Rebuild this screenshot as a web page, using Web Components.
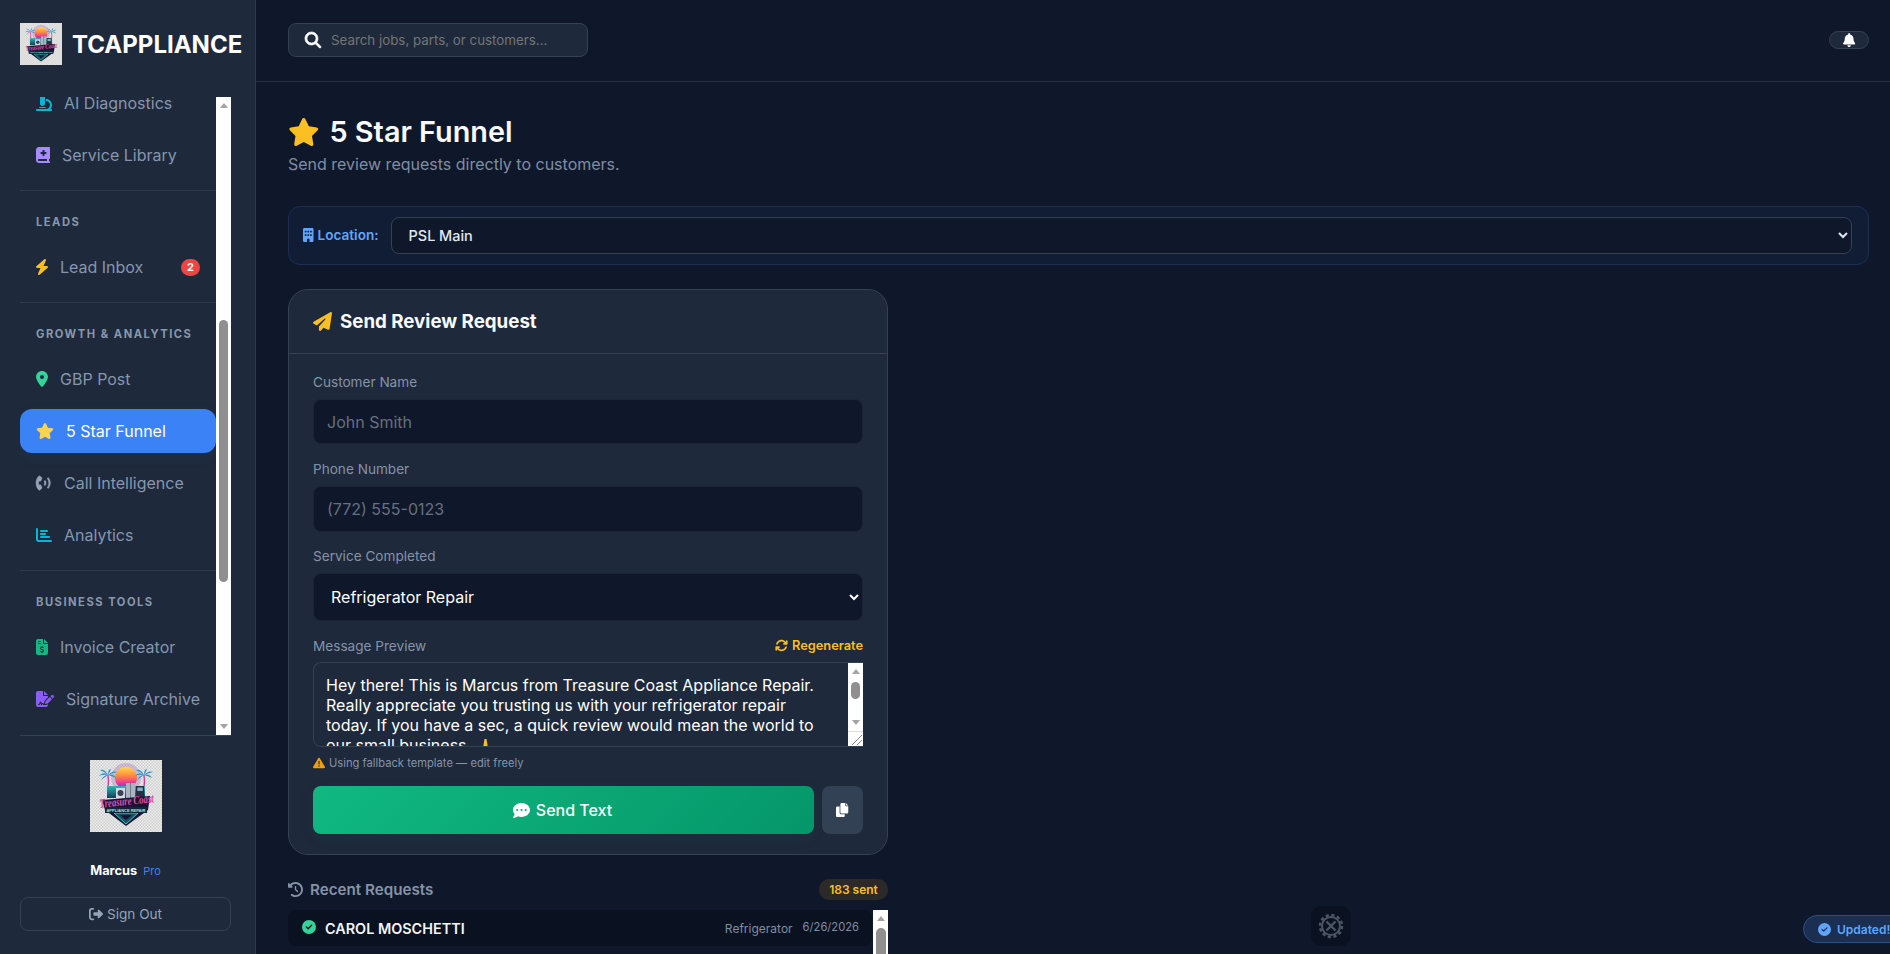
<![CDATA[<!DOCTYPE html>
<html lang="en"><head><meta charset="utf-8"><title>5 Star Funnel</title>
<style>
html,body{margin:0;height:100%;overflow:hidden;background:#0f172a}
body{font-family:Inter,"Liberation Sans",sans-serif;color:#f8fafc}
</style></head>
<body>
<tc-app>
  <tc-sidebar slot="sidebar">
    <tc-nav-section flush>
      <tc-nav-item><tc-icon slot="icon" name="microscope" color="#06b6d4"></tc-icon>AI Diagnostics</tc-nav-item>
      <tc-nav-item><tc-icon slot="icon" name="book" color="#a78bfa"></tc-icon>Service Library</tc-nav-item>
    </tc-nav-section>
    <tc-nav-section label="Leads">
      <tc-nav-item><tc-icon slot="icon" name="bolt" color="#fbbf24"></tc-icon>Lead Inbox<tc-badge slot="badge">2</tc-badge></tc-nav-item>
    </tc-nav-section>
    <tc-nav-section label="Growth &amp; Analytics">
      <tc-nav-item><tc-icon slot="icon" name="pin" color="#34d399"></tc-icon>GBP Post</tc-nav-item>
      <tc-nav-item active><tc-icon slot="icon" name="star" color="#fcd34d"></tc-icon>5 Star Funnel</tc-nav-item>
      <tc-nav-item><tc-icon slot="icon" name="call" color="#94a3b8" bold="14"></tc-icon>Call Intelligence</tc-nav-item>
      <tc-nav-item><tc-icon slot="icon" name="chart" color="#06b6d4"></tc-icon>Analytics</tc-nav-item>
    </tc-nav-section>
    <tc-nav-section label="Business Tools" last>
      <tc-nav-item><tc-icon slot="icon" name="invoice" color="#10b981"></tc-icon>Invoice Creator</tc-nav-item>
      <tc-nav-item><tc-icon slot="icon" name="signature" color="#8b5cf6"></tc-icon>Signature Archive</tc-nav-item>
    </tc-nav-section>
  </tc-sidebar>
  <tc-topbar slot="top"></tc-topbar>
  <tc-page-head></tc-page-head>
  <tc-location-bar></tc-location-bar>
  <tc-review-card></tc-review-card>
  <tc-recent>
    <tc-request name="Carol Moschetti" service="Refrigerator" date="6/26/2026"></tc-request>
  </tc-recent>
  <tc-gear slot="float"></tc-gear>
  <tc-toast slot="float">Updated!</tc-toast>
</tc-app>
<script>
const P={
search:[512,"M416 208c0 45.9-14.9 88.3-40 122.7L502.6 457.4c12.5 12.5 12.5 32.8 0 45.3s-32.8 12.5-45.3 0L330.7 376c-34.4 25.2-76.8 40-122.7 40C93.1 416 0 322.9 0 208S93.1 0 208 0S416 93.1 416 208zM208 352a144 144 0 1 0 0-288 144 144 0 1 0 0 288z"],
star:[576,"M316.9 18C311.6 7 300.4 0 288.1 0s-23.4 7-28.8 18L195 150.3 51.4 171.5c-12 1.8-22 10.2-25.7 21.7s-.7 24.2 7.9 32.7L137.8 329 113.2 474.7c-2 12 3 24.2 12.9 31.3s23 8 33.8 2.3l128.3-68.5 128.3 68.5c10.8 5.7 23.9 4.9 33.8-2.3s14.9-19.3 12.9-31.3L438.5 329 542.7 225.9c8.6-8.5 11.7-21.2 7.9-32.7s-13.7-19.9-25.7-21.7L381.2 150.3 316.9 18z"],
plane:[512,"M498.1 5.6c10.1 7 15.4 19.1 13.5 31.2l-64 416c-1.5 9.7-7.4 18.2-16 23s-18.9 5.4-28 1.6L284 427.7l-68.5 74.1c-8.9 9.7-22.9 12.9-35.2 8.1S160 493.2 160 480V396.4c0-4 1.5-7.8 4.2-10.7L331.8 202.8c5.8-6.3 5.6-16-.4-22s-15.7-6.4-22-.7L106 360.8 17.7 316.6C7.1 311.3 .3 300.7 0 288.9s5.9-22.8 16.1-28.7l448-256c10.7-6.1 23.9-5.5 34 1.4z"],
bell:[448,"M224 0c-17.7 0-32 14.3-32 32V51.2C119 66 64 130.6 64 208v18.8c0 47-17.3 92.4-48.5 127.6l-7.4 8.3c-8.4 9.4-10.4 22.9-5.3 34.4S19.4 416 32 416H416c12.6 0 24-7.4 29.2-18.9s3.1-25-5.3-34.4l-7.4-8.3C401.3 319.2 384 273.9 384 226.8V208c0-77.4-55-142-128-156.8V32c0-17.7-14.3-32-32-32zm45.3 493.3c12-12 18.7-28.3 18.7-45.3H224 160c0 17 6.7 33.3 18.7 45.3s28.3 18.7 45.3 18.7s33.3-6.7 45.3-18.7z"],
bolt:[384,"M349.4 44.6c5.9-13.7 1.5-29.7-10.6-38.5s-28.6-8-39.9 1.8l-256 224c-10 8.8-13.6 22.9-8.9 35.3S50.7 288 64 288H175.5L98.6 467.4c-5.9 13.7-1.5 29.7 10.6 38.5s28.6 8 39.9-1.8l256-224c10-8.8 13.6-22.9 8.9-35.3s-16.6-20.7-30-20.7H272.5L349.4 44.6z",32],
pin:[384,"M215.7 499.2C267 435 384 279.4 384 192C384 86 298 0 192 0S0 86 0 192c0 87.4 117 243 168.3 307.2c12.3 15.3 35.1 15.3 47.4 0zM192 128a64 64 0 1 1 0 128 64 64 0 1 1 0-128z"],
microscope:[512,"M160 32c0-17.7 14.3-32 32-32h32c17.7 0 32 14.3 32 32c17.7 0 32 14.3 32 32V288c0 17.7-14.3 32-32 32c0 17.7-14.3 32-32 32H192c-17.7 0-32-14.3-32-32c-17.7 0-32-14.3-32-32V64c0-17.7 14.3-32 32-32zM32 448H320c70.7 0 128-57.3 128-128s-57.3-128-128-128V128c106 0 192 86 192 192c0 49.2-18.5 94-48.9 128H480c17.7 0 32 14.3 32 32s-14.3 32-32 32H320 32c-17.7 0-32-14.3-32-32s14.3-32 32-32zm80-64H304c8.8 0 16 7.2 16 16s-7.2 16-16 16H112c-8.8 0-16-7.2-16-16s7.2-16 16-16z"],
book:[448,"M0 96C0 43 43 0 96 0H384h32c17.7 0 32 14.3 32 32V352c0 17.7-14.3 32-32 32v64c17.7 0 32 14.3 32 32s-14.3 32-32 32H384 96c-53 0-96-43-96-96V96zM64 416c0 17.7 14.3 32 32 32H352V384H96c-17.7 0-32 14.3-32 32zM208 112v48H160c-8.8 0-16 7.2-16 16v32c0 8.8 7.2 16 16 16h48v48c0 8.8 7.2 16 16 16h32c8.8 0 16-7.2 16-16V224h48c8.8 0 16-7.2 16-16V176c0-8.8-7.2-16-16-16H272V112c0-8.8-7.2-16-16-16H224c-8.8 0-16 7.2-16 16z"],
call:[512,"M110 20C40 60 0 150 0 256s40 196 110 236l74-62c10-9 12-20 7-32l-32-72c-5-11-15-16-27-13l-36 8c-10-24-14-44-14-65s4-41 14-65l36 8c12 3 22-2 27-13l32-72c5-12 3-23-7-32zM290 170l-36 30c28 32 28 80 0 112l36 30c46-50 46-122 0-172zM392 80l-36 30c72 84 72 208 0 292l36 30c92-106 92-246 0-352z"],
chart:[512,"M32 32c17.7 0 32 14.3 32 32V400c0 8.8 7.2 16 16 16H480c17.7 0 32 14.3 32 32s-14.3 32-32 32H80c-44.2 0-80-35.8-80-80V64C0 46.3 14.3 32 32 32zm96 96c0-17.7 14.3-32 32-32l192 0c17.7 0 32 14.3 32 32s-14.3 32-32 32l-192 0c-17.7 0-32-14.3-32-32zm32 64H288c17.7 0 32 14.3 32 32s-14.3 32-32 32H160c-17.7 0-32-14.3-32-32s14.3-32 32-32zm0 96H416c17.7 0 32 14.3 32 32s-14.3 32-32 32H160c-17.7 0-32-14.3-32-32s14.3-32 32-32z"],
invoice:[384,"M64 0C28.7 0 0 28.7 0 64V448c0 35.3 28.7 64 64 64H320c35.3 0 64-28.7 64-64V160H256c-17.7 0-32-14.3-32-32V0H64zM256 0V128H384L256 0zM64 80c0-8.8 7.2-16 16-16h64c8.8 0 16 7.2 16 16s-7.2 16-16 16H80c-8.8 0-16-7.2-16-16zm0 64c0-8.8 7.2-16 16-16h64c8.8 0 16 7.2 16 16s-7.2 16-16 16H80c-8.8 0-16-7.2-16-16zm128 72c8.8 0 16 7.2 16 16v17.3c8.5 1.2 16.7 3.1 24.1 5.1c8.5 2.3 13.6 11 11.3 19.6s-11 13.6-19.6 11.3c-11.1-3-22-5.2-32.1-5.3c-8.4-.1-17.4 1.8-23.6 5.5c-5.7 3.4-8.1 7.3-8.1 12.8c0 3.7 1.3 6.5 7.3 10.1c6.9 4.1 16.6 7.1 29.2 10.9l.5 .1c11.3 3.4 25.3 7.6 36.3 14.6c12.1 7.6 22.4 19.7 22.7 38.2c.3 19.3-9.6 33.3-22.9 41.6c-7.7 4.8-16.4 7.6-25.1 9.1V440c0 8.8-7.2 16-16 16s-16-7.2-16-16V422.2c-11.2-2.1-21.7-5.7-30.9-8.9c-2.1-.7-4.2-1.4-6.2-2.1c-8.4-2.8-12.9-11.9-10.1-20.2s11.9-12.9 20.2-10.1c2.5 .8 4.8 1.6 7.1 2.4c13.6 4.6 24.6 8.4 36.3 8.7c9.1 .3 17.9-1.7 23.7-5.3c5.1-3.2 7.9-7.3 7.8-14c-.1-4.6-1.8-7.8-7.7-11.6c-6.8-4.3-16.5-7.4-29-11.2l-1.6-.5c-11-3.3-24.3-7.3-34.8-13.7c-12-7.2-22.6-18.9-22.7-37.3c-.1-19.4 10.8-32.8 23.8-40.5c7.5-4.4 15.8-7.2 24.1-8.7V232c0-8.8 7.2-16 16-16z"],
signature:[576,"M64 0C28.7 0 0 28.7 0 64V448c0 35.3 28.7 64 64 64H320c35.3 0 64-28.7 64-64V428.7c-2.7 1.1-5.4 2-8.2 2.7l-60.1 15c-3 .7-6 1.2-9 1.4c-.9 .1-1.8 .2-2.7 .2H240c-6.1 0-11.6-3.4-14.3-8.8l-8.8-17.7c-1.7-3.4-5.1-5.5-8.8-5.5s-7.2 2.1-8.8 5.5l-8.8 17.7c-2.9 5.9-9.2 9.4-15.7 8.8s-12.1-5.1-13.9-11.3L144 381l-9.8 32.8c-6.1 20.3-24.8 34.2-46 34.2H80c-8.8 0-16-7.2-16-16s7.2-16 16-16h8.2c7.1 0 13.3-4.6 15.3-11.4l14.9-49.5c3.4-11.3 13.8-19.1 25.6-19.1s22.2 7.8 25.6 19.1l11.6 38.6c7.4-6.2 16.8-9.7 26.8-9.7c15.9 0 30.4 9 37.5 23.2l4.4 8.8h8.9c-3.1-8.8-3.7-18.4-1.4-27.8l15-60.1c2.8-11.3 8.6-21.5 16.9-29.7L384 203.6V160H256c-17.7 0-32-14.3-32-32V0H64zM256 0V128H384L256 0zM549.8 139.7c-15.6-15.6-40.9-15.6-56.6 0l-29.4 29.4 71 71 29.4-29.4c15.6-15.6 15.6-40.9 0-56.6l-14.4-14.4zM311.9 321c-4.1 4.1-7 9.2-8.4 14.9l-15 60.1c-1.4 5.5 .2 11.2 4.2 15.2s9.7 5.6 15.2 4.2l60.1-15c5.6-1.4 10.8-4.3 14.9-8.4L512.1 262.7l-71-71L311.9 321z"],
building:[384,"M48 0C21.5 0 0 21.5 0 48V464c0 26.5 21.5 48 48 48h96V432c0-26.5 21.5-48 48-48s48 21.5 48 48v80h96c26.5 0 48-21.5 48-48V48c0-26.5-21.5-48-48-48H48zM64 240c0-8.8 7.2-16 16-16h32c8.8 0 16 7.2 16 16v32c0 8.8-7.2 16-16 16H80c-8.8 0-16-7.2-16-16V240zm112-16h32c8.8 0 16 7.2 16 16v32c0 8.8-7.2 16-16 16H176c-8.8 0-16-7.2-16-16V240c0-8.8 7.2-16 16-16zm80 16c0-8.8 7.2-16 16-16h32c8.8 0 16 7.2 16 16v32c0 8.8-7.2 16-16 16H272c-8.8 0-16-7.2-16-16V240zM80 96h32c8.8 0 16 7.2 16 16v32c0 8.8-7.2 16-16 16H80c-8.8 0-16-7.2-16-16V112c0-8.8 7.2-16 16-16zm80 16c0-8.8 7.2-16 16-16h32c8.8 0 16 7.2 16 16v32c0 8.8-7.2 16-16 16H176c-8.8 0-16-7.2-16-16V112zM272 96h32c8.8 0 16 7.2 16 16v32c0 8.8-7.2 16-16 16H272c-8.8 0-16-7.2-16-16V112c0-8.8 7.2-16 16-16z"],
sync:[512,"M105.1 202.6c7.7-21.8 20.2-42.3 37.8-59.8c62.5-62.5 163.8-62.5 226.3 0L386.3 160H352c-17.7 0-32 14.3-32 32s14.3 32 32 32H463.5h.4c17.7 0 32-14.3 32-32V80c0-17.7-14.3-32-32-32s-32 14.3-32 32v35.2L414.4 97.6c-87.5-87.5-229.3-87.5-316.8 0C73.2 122 55.6 150.7 44.8 181.4c-5.9 16.7 2.9 34.9 19.5 40.8s34.9-2.9 40.8-19.5zM39 289.3c-5 1.5-9.8 4.2-13.7 8.2c-4 4-6.7 8.8-8.1 14c-.3 1.2-.6 2.5-.8 3.8c-.3 1.7-.4 3.4-.4 5.1V432c0 17.7 14.3 32 32 32s32-14.3 32-32V396.9l17.6 17.5c87.5 87.4 229.3 87.4 316.7 0c24.4-24.4 42.1-53.1 52.9-83.7c5.9-16.7-2.9-34.9-19.5-40.8s-34.9 2.9-40.8 19.5c-7.7 21.8-20.2 42.3-37.8 59.8c-62.5 62.5-163.8 62.5-226.3 0l-.1-.1L125.6 352H160c17.7 0 32-14.3 32-32s-14.3-32-32-32H48.4c-1.6 0-3.2 .1-4.8 .3s-3.1 .5-4.6 1z"],
warn:[512,"M256 32c14.2 0 27.3 7.5 34.5 19.8l216 368c7.3 12.4 7.3 27.7 .2 40.1S486.3 480 472 480H40c-14.3 0-27.6-7.7-34.7-20.1s-7-27.8 .2-40.1l216-368C228.7 39.5 241.8 32 256 32zm0 128c-13.3 0-24 10.7-24 24V296c0 13.3 10.7 24 24 24s24-10.7 24-24V184c0-13.3-10.7-24-24-24zm32 224a32 32 0 1 0 -64 0 32 32 0 1 0 64 0z"],
sms:[512,"M256 448c141.4 0 256-93.1 256-208S397.4 32 256 32S0 125.1 0 240c0 45.1 17.7 86.8 47.7 120.9c-1.9 24.5-11.4 46.3-21.4 62.9c-5.5 9.2-11.1 16.6-15.2 21.6c-2.1 2.5-3.7 4.4-4.9 5.7c-.6 .6-1 1.1-1.3 1.4l-.3 .3c-4.6 4.6-5.9 11.4-3.4 17.4c2.5 6 8.3 9.9 14.8 9.9c28.7 0 57.6-8.9 81.6-19.3c22.9-10 42.4-21.9 54.3-30.6c31.8 11.5 67 17.9 104.1 17.9zM128 208a32 32 0 1 1 0 64 32 32 0 1 1 0-64zm128 0a32 32 0 1 1 0 64 32 32 0 1 1 0-64zm128 0a32 32 0 1 1 0 64 32 32 0 1 1 0-64z"],
copy:[448,"M208 0H332V84c0 17 14 32 32 32h84V336c0 26.5-21.5 48-48 48H208c-26.5 0-48-21.5-48-48V48c0-26.5 21.5-48 48-48zM356 0l92 92H372c-9 0-16-7-16-16zM48 128h84V352c0 35 29 60 60 60H320v52c0 26.5-21.5 48-48 48H48c-26.5 0-48-21.5-48-48V176c0-26.5 21.5-48 48-48z"],
history:[512,"M75 75L41 41C25.9 25.9 0 36.6 0 57.9V168c0 13.3 10.7 24 24 24H134.1c21.4 0 32.1-25.9 17-41l-30.8-30.8C155 85.5 203 64 256 64c106 0 192 86 192 192s-86 192-192 192c-40.8 0-78.6-12.7-109.7-34.4c-14.5-10.1-34.4-6.6-44.6 7.9s-6.6 34.4 7.9 44.6C151.2 495 201.7 512 256 512c141.4 0 256-114.6 256-256S397.4 0 256 0C185.3 0 121.3 28.7 75 75zm181 53c-13.3 0-24 10.7-24 24V256c0 6.4 2.5 12.5 7 17l72 72c9.4 9.4 24.6 9.4 33.9 0s9.4-24.6 0-33.9l-65-65V152c0-13.3-10.7-24-24-24z"],
check:[512,"M256 512A256 256 0 1 0 256 0a256 256 0 1 0 0 512zM369 209L241 337c-9.4 9.4-24.6 9.4-33.9 0l-64-64c-9.4-9.4-9.4-24.6 0-33.9s24.6-9.4 33.9 0l47 47L335 175c9.4-9.4 24.6-9.4 33.9 0s9.4 24.6 0 33.9z"],
signout:[512,"M377.9 105.9L500.7 228.7c7.2 7.2 11.3 17.1 11.3 27.3s-4.1 20.1-11.3 27.3L377.9 406.1c-6.4 6.4-15 9.9-24 9.9c-18.7 0-33.9-15.2-33.9-33.9l0-62.1-128 0c-17.7 0-32-14.3-32-32l0-64c0-17.7 14.3-32 32-32l128 0 0-62.1c0-18.7 15.2-33.9 33.9-33.9c9 0 17.6 3.6 24 9.9zM160 96L96 96c-17.7 0-32 14.3-32 32l0 256c0 17.7 14.3 32 32 32l64 0c17.7 0 32 14.3 32 32s-14.3 32-32 32l-64 0c-53 0-96-43-96-96L0 128C0 75 43 32 96 32l64 0c17.7 0 32 14.3 32 32s-14.3 32-32 32z"]
};
customElements.define('tc-icon',class extends HTMLElement{
  connectedCallback(){
    if(this.shadowRoot)return;
    const [w,d,o=0]=P[this.getAttribute('name')],s=+(this.getAttribute('size')||16),c=this.getAttribute('color')||'currentColor',sw=this.getAttribute('bold')||0;
    this.attachShadow({mode:'open'}).innerHTML=`<style>:host{display:inline-flex;flex:none;line-height:0}svg{overflow:visible}</style><svg width="${s*w/512}" height="${s}" viewBox="${o} 0 ${w} 512" fill="${c}" stroke="${c}" stroke-width="${sw}" fill-rule="evenodd"><path d="${d}"/></svg>`;
  }
});
const def=(name,css,html)=>customElements.define(name,class extends HTMLElement{
  constructor(){super();this.attachShadow({mode:'open'}).innerHTML=`<style>${css}</style>${html}`;}
});
customElements.define('tc-scrollbar',class extends HTMLElement{
  connectedCallback(){
    if(this.shadowRoot)return;
    const top=this.getAttribute('top'),h=this.getAttribute('thumb'),w=this.getAttribute('tw')||9;
    this.attachShadow({mode:'open'}).innerHTML=`<style>
      :host{display:flex;flex:none;flex-direction:column;align-items:center;width:15px;background:#fff}
      .a{flex:none;height:17px;display:flex;align-items:center;justify-content:center}
      .up{width:0;height:0;border:4px solid transparent;border-top:0;border-bottom:5px solid #a3a3a3}
      .dn{width:0;height:0;border:4px solid transparent;border-bottom:0;border-top:5px solid #a3a3a3}
      .th{flex:none;width:${w}px;height:${h}px;margin-top:${top}px;border-radius:5px;background:#8f8f8f}
      .sp{flex:1}
    </style><div class="a"><i class="up"></i></div><div class="th"></div><div class="sp"></div><div class="a"><i class="dn"></i></div><slot></slot>`;
  }
});
def('tc-logo',':host{display:block;line-height:0}svg{width:100%;height:100%;display:block}',`
<svg viewBox="0 0 72 72" role="img" aria-label="Treasure Coast Appliance Repair logo"><defs>
<pattern id="c" width="3" height="3" patternUnits="userSpaceOnUse"><rect width="3" height="3" fill="#ececec"/><rect width="1.500" height="1.500" fill="#d0d0d0"/><rect x="1.500" y="1.500" width="1.500" height="1.500" fill="#d0d0d0"/></pattern>
<linearGradient id="s" x1="0" y1="0" x2="0" y2="1"><stop offset="0" stop-color="#ffd84d"/><stop offset=".4" stop-color="#ff8a3d"/><stop offset=".72" stop-color="#e8379b"/><stop offset="1" stop-color="#7a2fc0"/></linearGradient>
<linearGradient id="t" x1="0" y1="0" x2="0" y2="1"><stop offset="0" stop-color="#2fb7b4"/><stop offset="1" stop-color="#123e56"/></linearGradient>
<g id="p"><path d="M0 13Q1 6 0 0" stroke="#d43a9e" stroke-width="1.400" fill="none"/><path d="M0 0Q-5-4-9 1Q-5-1 0 0ZM0 0Q-3-6-8-5Q-3-3 0 0ZM0 0Q0-6 3-6Q2-3 0 0ZM0 0Q5-5 9-3Q5-2 0 0ZM0 0Q5-2 8 3Q4 1 0 0ZM0 0Q-4 0-7 5Q-3 2 0 0Z" fill="#2a8fc8"/></g>
</defs>
<rect width="72" height="72" fill="url(#c)"/>
<circle cx="36" cy="18" r="15" fill="#a66cc0" opacity=".35"/>
<circle cx="36" cy="18" r="11" fill="url(#s)"/>
<use href="#p" x="18" y="15"/><use href="#p" x="54" y="15"/>
<path d="M17 26H55V38H17Z" fill="url(#t)"/>
<path d="M36 23h9v15H36Z" fill="#aab4c0"/><path d="M40.500 23v15" stroke="#5a6472" stroke-width=".7"/>
<rect x="26" y="28" width="9" height="10" fill="#d7dbe0"/><circle cx="30.500" cy="33" r="3" fill="#34465a"/>
<rect x="46" y="26" width="8" height="12" fill="#26303c"/><rect x="47.300" y="27.500" width="5.500" height="3.500" fill="#7fb0c8"/>
<path d="M12 40L60 36L58 50L36 66L15 50Z" fill="#1b1233"/>
<path d="M24 53H48L36 64Z" fill="#0e5560" stroke="#35d0c8" stroke-width="1"/>
<path d="M30 55H42L36 60Z" fill="#1b1233"/>
<rect x="15" y="47" width="42" height="6" fill="#10263a"/>
<text transform="translate(37 45) rotate(-6) scale(.72 1)" text-anchor="middle" font-family="'Liberation Serif',serif" font-style="italic" font-weight="700" font-size="12" fill="#f25cb4" stroke="#5a0f4e" stroke-width=".2">Treasure Coast</text>
<text x="36" y="52" text-anchor="middle" font-family="'Liberation Sans',sans-serif" font-weight="700" font-size="4" fill="#9be8ea">APPLIANCE REPAIR</text>
</svg>`);
def('tc-app',`
:host{display:flex;height:100vh;position:relative;overflow:hidden}
.m{flex:1;min-width:0;display:flex;flex-direction:column;overflow:hidden;background:#0f172a}
.c{padding:32px 21px 0 32px;display:flex;flex-direction:column}
`,`<slot name="sidebar"></slot><div class="m"><slot name="top"></slot><div class="c"><slot></slot></div></div><slot name="float"></slot>`);
def('tc-sidebar',`
:host{display:flex;flex-direction:column;flex:none;width:256px;box-sizing:border-box;height:954px;background:#1e293b;border-right:1px solid #2c3a4f}
.brand{display:flex;align-items:center;gap:10px;height:97px;padding:0 0 9px 20px;box-sizing:border-box;flex:none}
tc-logo{width:42px;height:42px;flex:none}
.bt{font-size:24px;font-weight:700;color:#fff;white-space:nowrap}
.nav{display:flex;height:638px;margin:0 24px 0 20px;border-bottom:1px solid #334155;flex:none}
.list{flex:1;min-width:0;overflow:hidden}
.in{margin-top:-16px}
.foot{display:flex;flex-direction:column;align-items:center;padding:24px 24px 0 20px}
.foot tc-logo{width:72px;height:72px}
.user{display:flex;align-items:baseline;gap:6px;margin-top:31px;height:16px}
.nm{font-size:12.8px;font-weight:700;color:#fff}
.pro{font-size:11px;color:#3b82f6}
.out{margin-top:18px;width:100%;height:34px;box-sizing:border-box;border:1px solid #334155;border-radius:8px;background:none;color:#94a3b8;font:400 13.6px Inter,sans-serif;display:flex;align-items:center;justify-content:center;gap:4px;padding:0}
`,`
<div class="brand"><tc-logo></tc-logo><span class="bt">TCAPPLIANCE</span></div>
<div class="nav"><div class="list"><div class="in"><slot></slot></div></div><tc-scrollbar top="206" thumb="262"></tc-scrollbar></div>
<div class="foot"><tc-logo></tc-logo>
<div class="user"><span class="nm">Marcus</span><span class="pro">Pro</span></div>
<button class="out"><tc-icon name="signout" size="14"></tc-icon>Sign Out</button></div>`);
customElements.define('tc-nav-section',class extends HTMLElement{
  connectedCallback(){
    if(this.shadowRoot)return;
    const l=this.getAttribute('label');
    this.attachShadow({mode:'open'}).innerHTML=`<style>
      :host{display:block;border-bottom:1px solid #2c3a4f;padding-bottom:13px}
      :host([last]){border-bottom:0}
      .l{padding:24px 16px 0;height:15px;line-height:15px;margin-bottom:15px;font-size:11.2px;font-weight:700;letter-spacing:1.5px;text-transform:uppercase;color:#94a3b8;opacity:.9}
      .i{display:flex;flex-direction:column;gap:8px}
    </style>${l?`<div class="l">${l}</div>`:''}<div class="i"><slot></slot></div>`;
  }
});
def('tc-nav-item',`
:host{display:flex;align-items:center;gap:12px;height:44px;padding:0 16px;border-radius:12px;font-size:16px;color:#8596ae;white-space:nowrap}
:host([active]){background:#3b82f6;color:#fff;font-weight:400;box-shadow:0 4px 14px rgba(59,130,246,.07)}
.b{margin-left:auto;display:flex}
`,`<slot name="icon"></slot><span><slot></slot></span><span class="b"><slot name="badge"></slot></span>`);
def('tc-badge',`:host{display:flex;align-items:center;justify-content:center;width:19px;height:17px;border-radius:9px;background:#ef4444;color:#fff;font-size:11px;font-weight:700}`,`<slot></slot>`);
def('tc-topbar',`
:host{display:flex;flex:none;align-items:center;justify-content:space-between;height:82px;box-sizing:border-box;padding:0 21px 1px 32px;border-bottom:1px solid #243044}
label{display:flex;align-items:center;gap:10px;box-sizing:border-box;width:300px;height:34px;padding:0 16px;background:#1e293b;border:1px solid #334155;border-radius:8px}
input{flex:1;min-width:0;background:none;border:0;padding:0;outline:0;font:400 13.333px Inter,sans-serif;color:#fff}
input::placeholder{color:#757575;opacity:1}
.bell{width:40px;height:18px;box-sizing:border-box;border:1px solid #334155;background:#1e293b;border-radius:9px;padding:0;display:flex;align-items:center;justify-content:center;color:#fff}
`,`<label><tc-icon name="search" size="16" color="#fff" bold="22"></tc-icon><input placeholder="Search jobs, parts, or customers..."></label>
<button class="bell" aria-label="Notifications"><tc-icon name="bell" size="14" color="#fff"></tc-icon></button>`);
def('tc-page-head',`
:host{display:block;margin-bottom:32px}
h1{margin:0;display:flex;align-items:center;gap:10px;font-size:28.8px;line-height:36px;font-weight:600;color:#f8fafc}
p{margin:5px 0 0;font-size:16px;line-height:19px;color:#7f8ea3}
`,`<h1><tc-icon name="star" size="28" color="#fbbf24"></tc-icon>5 Star Funnel</h1><p>Send review requests directly to customers.</p>`);
def('tc-location-bar',`
:host{display:flex;align-items:center;gap:12px;height:59px;box-sizing:border-box;padding:0 16px 0 14px;background:#111d35;border:1px solid #1b2f55;border-radius:12px;margin-bottom:24px}
label{display:flex;align-items:center;gap:4px;margin-top:-1px;font-size:13.6px;font-weight:600;color:#60a5fa;white-space:nowrap}
select{flex:1;height:37px;box-sizing:border-box;padding:0 8px 0 13px;background:#0f172a;color:#e2e8f0;border:1px solid #334155;border-radius:8px;font:500 14.4px Inter,sans-serif}
`,`<label><tc-icon name="building" size="14" color="#60a5fa"></tc-icon>Location:</label><select><option>PSL Main</option></select>`);
def('tc-review-card',`
:host{display:block;width:600px;box-sizing:border-box;background:#1e293b;border:1px solid #334155;border-radius:20px}
header{display:flex;align-items:center;gap:8px;height:64px;padding:0 24px;box-sizing:border-box;border-bottom:1px solid #334155;font-size:18.72px;font-weight:700;color:#f8fafc}
.b{padding:20px 24px}
.lab{display:block;font-size:13.6px;line-height:16px;color:#8593a8;margin-bottom:9px}
input,select{display:block;width:100%;box-sizing:border-box;border:1px solid #1b2536;border-radius:8px;background:#0f172a;font:400 16px Inter,sans-serif;color:#fff;padding:0 13px;outline:0}
input::placeholder{color:#66707f;opacity:1}
.n{height:45px;margin-bottom:17px}.p{height:46px;margin-bottom:16px}
select{height:48px;margin-bottom:17px}
.mh{display:flex;justify-content:space-between;align-items:center;margin-bottom:8px;height:16px}
.mh .lab{margin:0}
.re{display:flex;align-items:center;gap:4px;margin-top:-2px;font-size:12.8px;font-weight:600;color:#fbbf24}
.ta{position:relative;display:flex;height:85px;box-sizing:border-box;border:1px solid #334155;border-radius:8px 0 0 8px;border-right:0;overflow:hidden}
textarea{flex:1;min-width:0;box-sizing:border-box;height:84px;border:0;background:none;resize:none;overflow:hidden;outline:0;padding:12px 12px;font:400 16px/20px Inter,sans-serif;color:#fff}
.em{position:absolute;left:167px;top:76px;width:9px;height:9px}
.bar{display:flex;flex-direction:column;flex:none;width:15px;background:#fff}
.bar tc-scrollbar{flex:1}
.grip{flex:none;height:15px;background:#fff;border-top:1px solid #ddd;box-sizing:border-box;display:flex;align-items:flex-end;justify-content:flex-end}
.w{display:flex;align-items:center;gap:4px;margin-top:8px;height:16px;font-size:11.2px;color:#8593a8}
.acts{display:flex;gap:8px;margin-top:15px}
.send{flex:1;height:48px;border:0;border-radius:8px;background:linear-gradient(135deg,#10b981,#059669);color:#fff;font:500 16px Inter,sans-serif;display:flex;align-items:center;justify-content:center;gap:6px;padding:0 2px 0 0;box-shadow:0 4px 18px rgba(16,185,129,.05)}
.cp{width:41px;height:48px;border:0;border-radius:8px;background:#334155;display:flex;align-items:center;justify-content:center;padding:0}
`,`<header><tc-icon name="plane" size="19" color="#fbbf24"></tc-icon>Send Review Request</header>
<div class="b">
<label class="lab" for="n">Customer Name</label><input id="n" class="n" placeholder="John Smith">
<label class="lab" for="p">Phone Number</label><input id="p" class="p" placeholder="(772) 555-0123">
<label class="lab" for="s">Service Completed</label><select id="s"><option>Refrigerator Repair</option></select>
<div class="mh"><label class="lab" for="t">Message Preview</label><span class="re"><tc-icon name="sync" size="13" color="#fbbf24"></tc-icon>Regenerate</span></div>
<div class="ta"><textarea id="t">Hey there! This is Marcus from Treasure Coast Appliance Repair. Really appreciate you trusting us with your refrigerator repair today. If you have a sec, a quick review would mean the world to our small business.</textarea>
<svg class="em" viewBox="0 0 9 9"><path d="M3.500 0h2L7 9H2z" fill="#fbbf24"/></svg>
<div class="bar"><tc-scrollbar top="2" thumb="17"></tc-scrollbar><div class="grip"><svg width="14" height="14" viewBox="0 0 14 14"><path d="M3 13L13 3M8 13L13 8" stroke="#888" fill="none"/></svg></div></div></div>
<div class="w"><tc-icon name="warn" size="12" color="#f59e0b"></tc-icon>Using fallback template — edit freely</div>
<div class="acts"><button class="send"><tc-icon name="sms" size="17" color="#fff"></tc-icon>Send Text</button><button class="cp" aria-label="Copy"><tc-icon name="copy" size="14" color="#fff"></tc-icon></button></div>
</div>`);
def('tc-recent',`
:host{display:block;width:600px;margin-top:24px}
.h{display:flex;justify-content:space-between;align-items:center;height:21px;margin-bottom:10px}
.t{display:flex;align-items:center;gap:7px;font-size:15.2px;font-weight:600;color:#8593a8}
.n{height:21px;line-height:21px;width:69px;text-align:center;border-radius:10px;background:#2b2a28;color:#fbbf24;font-size:12px;font-weight:600}
.r{display:flex;gap:1px;height:240px}
.l{flex:1;min-width:0}
`,`<div class="h"><span class="t"><tc-icon name="history" size="15" color="#8593a8"></tc-icon>Recent Requests</span><span class="n">183 sent</span></div>
<div class="r"><div class="l"><slot></slot></div><tc-scrollbar top="1" thumb="90" tw="10"></tc-scrollbar></div>`);
customElements.define('tc-request',class extends HTMLElement{
  connectedCallback(){
    if(this.shadowRoot)return;
    this.attachShadow({mode:'open'}).innerHTML=`<style>
    :host{display:flex;align-items:center;height:36px;padding:0 13px 0 14px;border-radius:8px;background:#0a1120}
    .c{margin:-2px 9px 0 0;display:flex}
    .n{font-size:14.4px;font-weight:600;color:#f1f5f9;text-transform:uppercase}
    .s{margin-left:auto;font-size:12px;color:#7f8ea3}
    .d{margin-left:10px;font-size:11.2px;color:#7f8ea3;margin-top:-2px}
    </style><span class="c"><tc-icon name="check" size="14" color="#34d399"></tc-icon></span><span class="n">${this.getAttribute('name')}</span><span class="s">${this.getAttribute('service')}</span><span class="d">${this.getAttribute('date')}</span>`;
  }
});
def('tc-gear',`
:host{position:absolute;left:1311px;top:906px;width:40px;height:40px;border-radius:10px;background:#0a1120;display:flex;align-items:center;justify-content:center}
`,`<svg width="26" height="26" viewBox="0 0 26 26" fill="none" stroke="#4b5563" aria-hidden="true"><circle cx="13" cy="13" r="11" stroke-width="2.500" stroke-dasharray="3.200 2.560"/><circle cx="13" cy="13" r="9" stroke-width="2"/><path d="M8.500 8.500L17.500 17.500M17.500 8.500L8.500 17.500" stroke-width="2.400"/></svg>`);
def('tc-toast',`
:host{position:absolute;left:1803px;top:915px;height:28px;box-sizing:border-box;padding:0 14px;display:flex;align-items:center;gap:6px;background:#1a2f52;border:1px solid #2a4f86;border-radius:14px;font-size:12px;font-weight:600;color:#60a5fa;white-space:nowrap}
`,`<tc-icon name="check" size="13" color="#60a5fa"></tc-icon><slot></slot>`);
</script>
</body></html>]]>
